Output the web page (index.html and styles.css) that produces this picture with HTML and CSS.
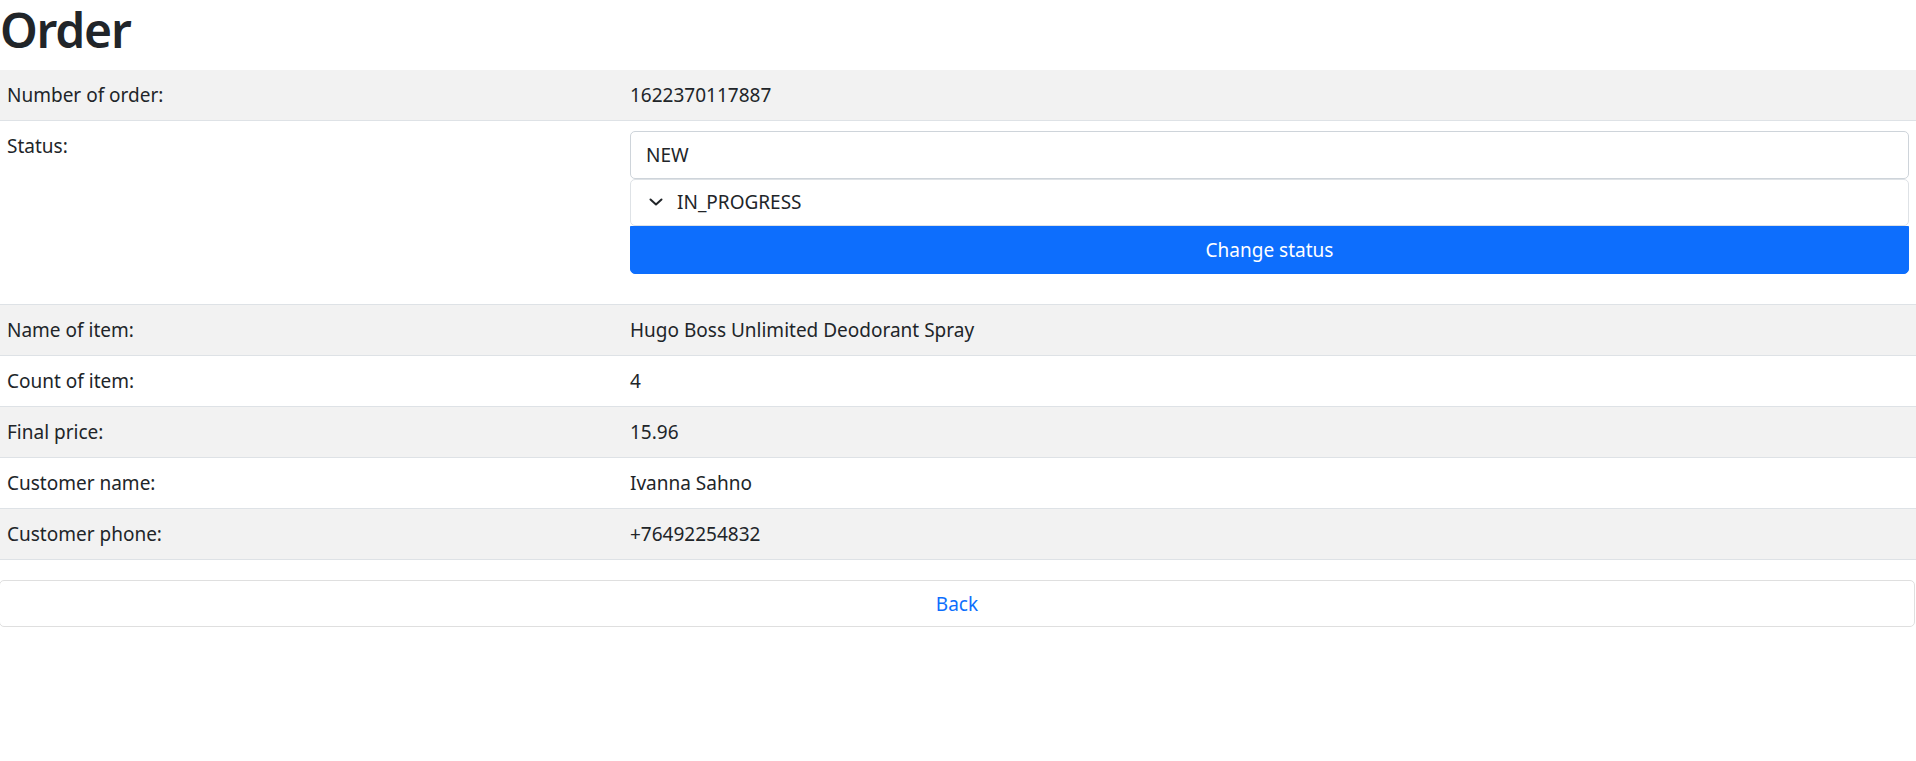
FILE: index.html
```html
<!DOCTYPE html>
<html lang="en">
<head>
<meta charset="utf-8">
<title>Order</title>
<link rel="stylesheet" href="styles.css">
</head>
<body>
<h1 class="title">Order</h1>
<div class="table">
  <div class="row striped">
    <div class="cell label">Number of order:</div>
    <div class="cell value">1622370117887</div>
  </div>
  <div class="row">
    <div class="cell label">Status:</div>
    <div class="cell value">
      <form class="status-form">
        <div class="field">NEW</div>
        <div class="field select">
          <svg class="chevron" width="14" height="8" viewBox="0 0 14 8"><path d="M1.5 1.5 L7 6.5 L12.5 1.5" fill="none" stroke="#212529" stroke-width="2" stroke-linecap="round" stroke-linejoin="round"/></svg>
          <span>IN_PROGRESS</span>
        </div>
        <button type="button" class="btn-primary">Change status</button>
      </form>
    </div>
  </div>
  <div class="row striped">
    <div class="cell label">Name of item:</div>
    <div class="cell value">Hugo Boss Unlimited Deodorant Spray</div>
  </div>
  <div class="row">
    <div class="cell label">Count of item:</div>
    <div class="cell value">4</div>
  </div>
  <div class="row striped">
    <div class="cell label">Final price:</div>
    <div class="cell value">15.96</div>
  </div>
  <div class="row">
    <div class="cell label">Customer name:</div>
    <div class="cell value">Ivanna Sahno</div>
  </div>
  <div class="row striped">
    <div class="cell label">Customer phone:</div>
    <div class="cell value">+76492254832</div>
  </div>
</div>
<div class="back-box"><a class="back" href="#">Back</a></div>
</body>
</html>
```
FILE: styles.css
```css
html, body {
  margin: 0;
  padding: 0;
  background: #fff;
}
body {
  font-family: "Noto Sans", "Open Sans", sans-serif;
  font-size: 19px;
  line-height: 30px;
  color: #212529;
}
.title {
  margin: 0 0 10px 0;
  font-size: 48px;
  line-height: 60px;
  font-weight: 600;
  color: #212529;
  letter-spacing: -1.2px;
}
.table {
  display: flex;
  flex-direction: column;
  margin-bottom: 20px;
}
.row {
  display: grid;
  grid-template-columns: 623px 1fr;
  border-bottom: 1px solid #dee2e6;
}
.row.striped {
  background: #f2f2f2;
}
.cell {
  padding: 10px 7px;
}
.status-form {
  display: flex;
  flex-direction: column;
  margin: 0 0 20px 0;
}
.field {
  height: 47.5px;
  box-sizing: border-box;
  border: 1px solid #ced4da;
  border-radius: 5px;
  padding: 7px 15px;
  background: #fff;
  display: flex;
  align-items: center;
  color: #212529;
}
.field.select {
  border-color: #dee2e6;
  padding-left: 18px;
  gap: 14px;
}
.chevron {
  flex: none;
}
.btn-primary {
  height: 48px;
  border: 1px solid #0d6efd;
  background: #0d6efd;
  color: #fff;
  font-family: inherit;
  font-size: 19px;
  line-height: 30px;
  border-radius: 0 0 5px 5px;
  padding: 7px 15px;
  cursor: pointer;
}
.back-box {
  display: flex;
  justify-content: center;
  align-items: center;
  height: 47px;
  box-sizing: border-box;
  margin-left: -1px;
  margin-right: 1px;
  border: 1px solid #dfdfdf;
  border-radius: 5px;
}
.back {
  color: #0d6efd;
  text-decoration: none;
}
```
